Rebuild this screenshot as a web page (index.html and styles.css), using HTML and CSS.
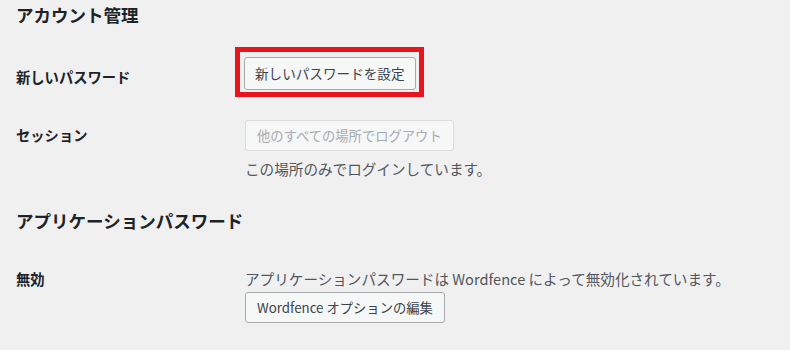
FILE: index.html
```html
<!DOCTYPE html>
<html lang="ja">

<head>
    <meta charset="UTF-8">
    <meta name="viewport" content="width=device-width, initial-scale=1.0">
    <title>アカウント管理</title>

    <link rel="stylesheet" href="styles.css">
</head>

<body>
    <div class="wrap">
        <h2 class="section-title">アカウント管理</h2>

        <div class="form-row row-password">
            <div class="row-label">新しいパスワード</div>
            <div class="row-field">
                <span class="highlight">
                    <button type="button" class="button button-large">新しいパスワードを設定</button>
                </span>
            </div>
        </div>

        <div class="form-row row-sessions">
            <div class="row-label label-session">セッション</div>
            <div class="row-field">
                <button type="button" class="button" disabled>他のすべての場所でログアウト</button>
                <p class="description">この場所のみでログインしています。</p>
            </div>
        </div>

        <h2 class="section-title title-app">アプリケーションパスワード</h2>

        <div class="form-row row-app">
            <div class="row-label">無効</div>
            <div class="row-field">
                <p class="notice-text">アプリケーションパスワードは Wordfence によって無効化されています。</p>
                <button type="button" class="button">Wordfence オプションの編集</button>
            </div>
        </div>
    </div>
</body>

</html>
```

FILE: styles.css
```css
* {
    margin: 0;
    padding: 0;
    box-sizing: border-box;
    font-family: 'Noto Sans CJK JP', 'Noto Sans', sans-serif;
}
body {
    background-color: #f0f0f1;
    color: #3c434a;
    font-size: 14px;
}
.wrap {
    padding-left: 16px;
}
.section-title {
    font-size: 17.5px;
    font-weight: 700;
    line-height: 30px;
    color: #1d2327;
}
.title-app {
    margin-top: 27px;
}
.form-row {
    display: grid;
    grid-template-columns: 229px 1fr;
}
.row-password {
    margin-top: 17px;
}
.row-sessions {
    margin-top: 23px;
}
.row-app {
    margin-top: 33px;
}
.row-label {
    font-size: 14.3px;
    font-weight: 700;
    line-height: 20px;
    color: #1d2327;
}
.row-password .row-label {
    padding-top: 20px;
}
.label-session {
    padding-top: 5px;
}
.row-field {
    display: flex;
    flex-direction: column;
    align-items: flex-start;
}
.highlight {
    display: inline-block;
    margin-left: -10px;
    border: 5px solid #e8141d;
    padding: 5px 3px 2px 4px;
}
.button {
    height: 31px;
    padding: 0 11px;
    font-size: 13.3px;
    line-height: 29px;
    color: #3c434a;
    background: #f6f7f7;
    border: 1px solid #a7aaad;
    border-radius: 3px;
    cursor: pointer;
}
.button-large {
    height: 33px;
    padding: 0 10px;
    font-size: 13.6px;
}
.button:disabled {
    color: #a7aaad;
    border-color: #dcdcde;
    cursor: default;
}
.description {
    margin-top: 8px;
    font-size: 14.6px;
    line-height: 20px;
    color: #50575e;
}
.notice-text {
    font-size: 14.6px;
    line-height: 20px;
    color: #50575e;
    margin-bottom: 3px;
}
```
